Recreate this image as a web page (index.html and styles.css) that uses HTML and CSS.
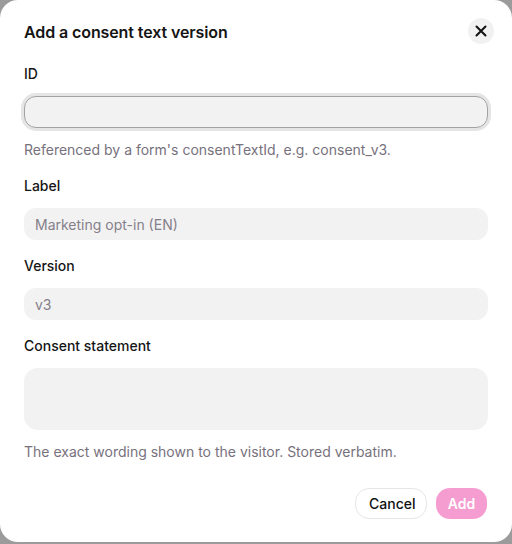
FILE: index.html
```html
<!DOCTYPE html>
<html lang="en">
<head>
<meta charset="utf-8">
<title>Add a consent text version</title>
<link rel="stylesheet" href="styles.css">
</head>
<body>
<div class="dialog">
  <div class="header">
    <h2 class="title">Add a consent text version</h2>
    <button class="close" aria-label="Close">
      <svg width="12" height="12" viewBox="0 0 12 12"><path d="M1.5 1.5L10.5 10.5M10.5 1.5L1.5 10.5" stroke="#111" stroke-width="2" stroke-linecap="round"/></svg>
    </button>
  </div>
  <div class="fields">
    <div class="field">
      <label class="label">ID</label>
      <div class="input focused"></div>
      <p class="help">Referenced by a form's consentTextId, e.g. consent_v3.</p>
    </div>
    <div class="field">
      <label class="label">Label</label>
      <div class="input"><span class="placeholder">Marketing opt-in (EN)</span></div>
    </div>
    <div class="field">
      <label class="label">Version</label>
      <div class="input"><span class="placeholder">v3</span></div>
    </div>
    <div class="field">
      <label class="label">Consent statement</label>
      <div class="input textarea"></div>
      <p class="help">The exact wording shown to the visitor. Stored verbatim.</p>
    </div>
  </div>
  <div class="actions">
    <button class="btn cancel">Cancel</button>
    <button class="btn add">Add</button>
  </div>
</div>
</body>
</html>
```
FILE: styles.css
```css
* { box-sizing: border-box; }
html, body { margin: 0; padding: 0; }
body {
  width: 512px;
  height: 544px;
  background: #9b9b9b;
  font-family: Inter, "Noto Sans", sans-serif;
  overflow: hidden;
}
.dialog {
  width: 512px;
  height: 542px;
  background: #fff;
  border-radius: 18px;
  padding: 18px 24px 0 24px;
  display: flex;
  flex-direction: column;
}
.header {
  display: flex;
  align-items: center;
  justify-content: space-between;
  height: 26px;
  margin-right: -6px;
}
.title {
  margin: 0;
  font-size: 16px;
  font-weight: 600;
  color: #151515;
  line-height: 24px;
  letter-spacing: -0.1px;
  padding-top: 2px;
}
.close {
  width: 26px;
  height: 26px;
  border-radius: 50%;
  border: none;
  background: #f1f1f1;
  padding: 0;
  display: flex;
  align-items: center;
  justify-content: center;
}
.fields {
  margin-top: 20px;
  display: flex;
  flex-direction: column;
  gap: 16px;
}
.field {
  display: flex;
  flex-direction: column;
  gap: 12px;
}
.label {
  font-size: 14px;
  font-weight: 500;
  line-height: 20px;
  color: #151515;
}
.input {
  height: 32px;
  border-radius: 12px;
  background: #f2f2f2;
  padding: 0 11px;
  display: flex;
  align-items: center;
  font-size: 14px;
}
.input.focused {
  border: 1px solid #a3a3a3;
  box-shadow: 0 0 0 3px #e5e5e5;
}
.input.textarea {
  height: 62px;
  border-radius: 14px;
}
.placeholder {
  color: #857f8a;
}
.help {
  margin: 0;
  font-size: 14px;
  line-height: 20px;
  color: #77717d;
}
.actions {
  margin-top: 26px;
  display: flex;
  justify-content: flex-end;
  gap: 9px;
  margin-right: 1px;
}
.btn {
  height: 31px;
  border-radius: 14px;
  font-family: Inter, "Noto Sans", sans-serif;
  font-size: 14px;
  padding: 0 13px;
}
.cancel {
  width: 72px;
  background: #fff;
  border: 1px solid #e6e6e6;
  color: #111;
  font-weight: 500;
}
.add {
  width: 51px;
  background: #f59dd0;
  border: none;
  color: #fff;
  font-weight: 600;
  padding: 0;
}
```
